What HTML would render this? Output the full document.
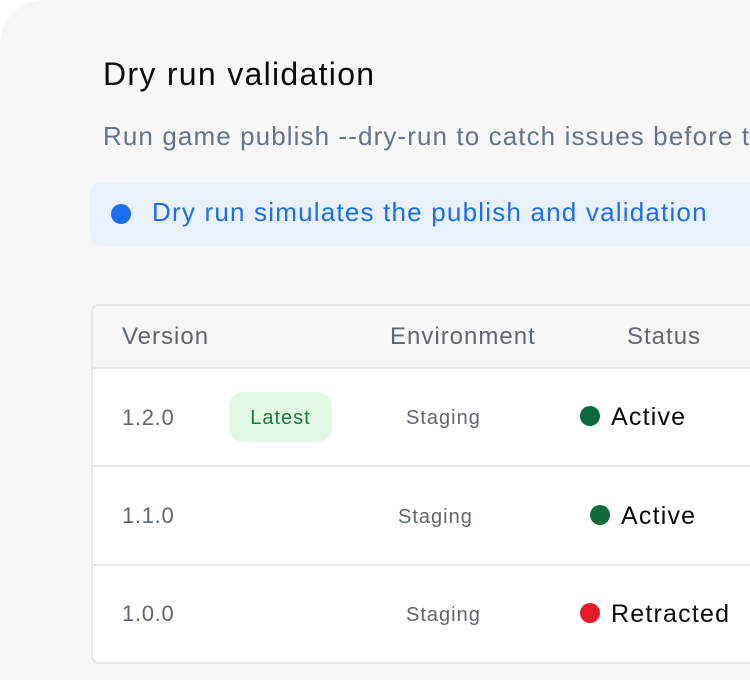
<!DOCTYPE html>
<html><head><style>
*{margin:0;padding:0;box-sizing:border-box}
html,body{width:750px;height:680px;overflow:hidden}
body{background:#fff;font-family:"Liberation Sans",sans-serif;position:relative}
.card{position:absolute;left:0;top:0;width:750px;height:680px;background:#f7f7f7;border-top-left-radius:44px}
.a{position:absolute;white-space:nowrap}
.dot{position:absolute;width:20px;height:20px;border-radius:50%}
.line{position:absolute;left:91px;width:659px;height:2px;background:#e6e7ea}
.h{font-size:24px;color:#5f6673;letter-spacing:1px}
.v{font-size:22px;color:#5f6673;letter-spacing:0.7px}
.s{font-size:20px;color:#5f6673;letter-spacing:1px}
.st{font-size:25px;color:#0b0b0b;letter-spacing:1.2px}
</style></head><body>
<div class="card"></div>
<div class="a" style="left:103px;top:56px;font-size:32px;color:#0b0b0b;letter-spacing:1.3px">Dry run validation</div>
<div class="a" style="left:103px;top:121px;width:647px;overflow:hidden;font-size:26px;color:#64748b;letter-spacing:1.1px">Run game publish --dry-run to catch issues before t</div>
<div class="a" style="left:90px;top:182px;width:660px;height:64px;background:#e9f1fd;border-radius:12px 0 0 12px"></div>
<div class="dot" style="left:111px;top:204px;background:#1a6ef5"></div>
<div class="a" style="left:152px;top:197px;font-size:26px;color:#1a6ef5;letter-spacing:1.2px">Dry run simulates the publish and validation</div>
<div class="a" style="left:91px;top:304px;width:659px;height:360px;background:#fff;border:2px solid #e6e7ea;border-right:none;border-radius:8px 0 0 8px"></div>
<div class="a" style="left:93px;top:306px;width:657px;height:62px;background:#f7f7f8;border-top-left-radius:6px"></div>
<div class="line" style="top:367px"></div>
<div class="line" style="top:465px"></div>
<div class="line" style="top:564px"></div>
<div class="a h" style="left:122px;top:323px">Version</div>
<div class="a h" style="left:390px;top:323px">Environment</div>
<div class="a h" style="left:627px;top:323px">Status</div>
<div class="a v" style="left:122px;top:405px">1.2.0</div>
<div class="a" style="left:229px;top:392px;width:103px;height:50px;background:#e2f8e4;border-radius:14px;color:#177a3f;font-size:20px;letter-spacing:1px;text-align:center;line-height:52px">Latest</div>
<div class="a s" style="left:406px;top:407px">Staging</div>
<div class="dot" style="left:580px;top:406px;background:#0b6b3a"></div>
<div class="a st" style="left:611px;top:403px">Active</div>
<div class="a v" style="left:122px;top:503px">1.1.0</div>
<div class="a s" style="left:398px;top:506px">Staging</div>
<div class="dot" style="left:590px;top:505px;background:#0b6b3a"></div>
<div class="a st" style="left:621px;top:502px">Active</div>
<div class="a v" style="left:122px;top:601px">1.0.0</div>
<div class="a s" style="left:406px;top:604px">Staging</div>
<div class="dot" style="left:580px;top:603px;background:#e51d2a"></div>
<div class="a st" style="left:611px;top:600px">Retracted</div>
</body></html>
